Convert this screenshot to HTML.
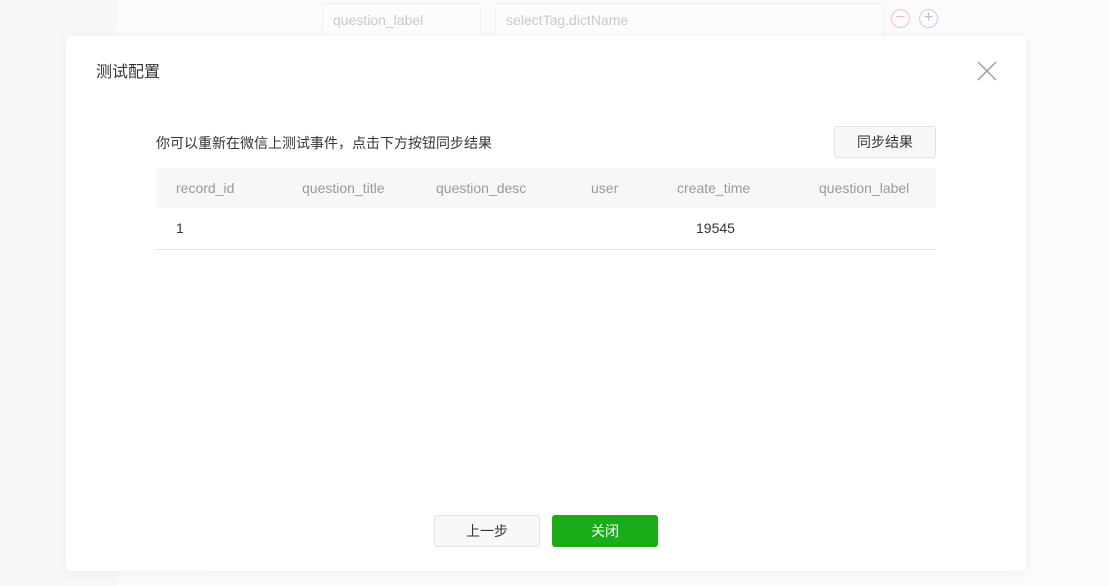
<!DOCTYPE html>
<html><head><meta charset="utf-8"><style>
*{box-sizing:border-box;margin:0;padding:0}
body{width:1109px;height:586px;overflow:hidden;position:relative;background:#f8f9fa;font-family:"Liberation Sans","Noto Sans CJK SC",sans-serif;}
.bg1{position:absolute;left:0;top:0;width:118px;height:586px;background:#f7f8f9}
.bg2{position:absolute;left:118px;top:0;width:90px;height:586px;background:#fafbfb}
.bg3{position:absolute;left:208px;top:0;width:901px;height:586px;background:#fbfbfc}
.inp{position:absolute;top:3px;height:34px;border:1px solid #eeeff1;background:#fcfcfd;border-radius:3px;color:#c7c9cc;font-size:14px;line-height:32px;padding-left:10px}
.circ{position:absolute;top:9px;width:19px;height:19px;border-radius:50%;font-size:16px;line-height:16px;text-align:center}
.modal{position:absolute;left:66px;top:36px;width:960px;height:535px;background:#fff;border-radius:4px;box-shadow:0 2px 12px rgba(0,0,0,.05)}
.title{position:absolute;left:30px;top:22px;font-size:16px;color:#333}
.close{position:absolute;left:911px;top:25px}
.desc{position:absolute;left:90px;top:97px;font-size:14px;color:#353535}
.sync{position:absolute;left:768px;top:90px;width:102px;height:32px;border:1px solid #e2e2e2;border-radius:3px;background:#f8f8f8;font-size:14px;color:#353535;text-align:center;line-height:30px}
.thead{position:absolute;left:90px;top:132px;width:780px;height:40px;background:#f6f7f9;font-size:14px;color:#9a9a9a}
.row{position:absolute;left:90px;top:172px;width:780px;height:42px;border-bottom:1px solid #e7e7e7;font-size:14px;color:#353535}
.c{position:absolute;top:0;line-height:40px;white-space:nowrap}
.btn{position:absolute;top:479px;height:32px;border-radius:3px;font-size:14px;text-align:center;line-height:30px}
</style></head><body>
<div class="bg1"></div><div class="bg2"></div><div class="bg3"></div>
<div class="inp" style="left:322px;width:159px">question_label</div>
<div class="inp" style="left:495px;width:389px">selectTag.dictName</div>
<div class="circ" style="left:891px;border:1px solid #f5c0c0;color:#f3b4b4">−</div>
<div class="circ" style="left:919px;border:1px solid #c9cfe0;color:#b9c0d6">+</div>
<div class="modal">
<div class="title">测试配置</div>
<svg class="close" width="20" height="20" viewBox="0 0 20 20"><path d="M1 1L19 19M19 1L1 19" stroke="#999" stroke-width="1.4" fill="none"/></svg>
<div class="desc">你可以重新在微信上测试事件，点击下方按钮同步结果</div>
<div class="sync">同步结果</div>
<div class="thead">
<span class="c" style="left:20px">record_id</span>
<span class="c" style="left:146px">question_title</span>
<span class="c" style="left:280px">question_desc</span>
<span class="c" style="left:435px">user</span>
<span class="c" style="left:521px">create_time</span>
<span class="c" style="left:663px">question_label</span>
</div>
<div class="row">
<span class="c" style="left:20px;line-height:41px">1</span>
<span class="c" style="left:540px;line-height:41px">19545</span>
</div>
<div class="btn" style="left:368px;width:106px;border:1px solid #e2e2e2;background:#f8f8f8;color:#353535">上一步</div>
<div class="btn" style="left:486px;width:106px;background:#1aad19;color:#fff;line-height:32px">关闭</div>
</div>
</body></html>
